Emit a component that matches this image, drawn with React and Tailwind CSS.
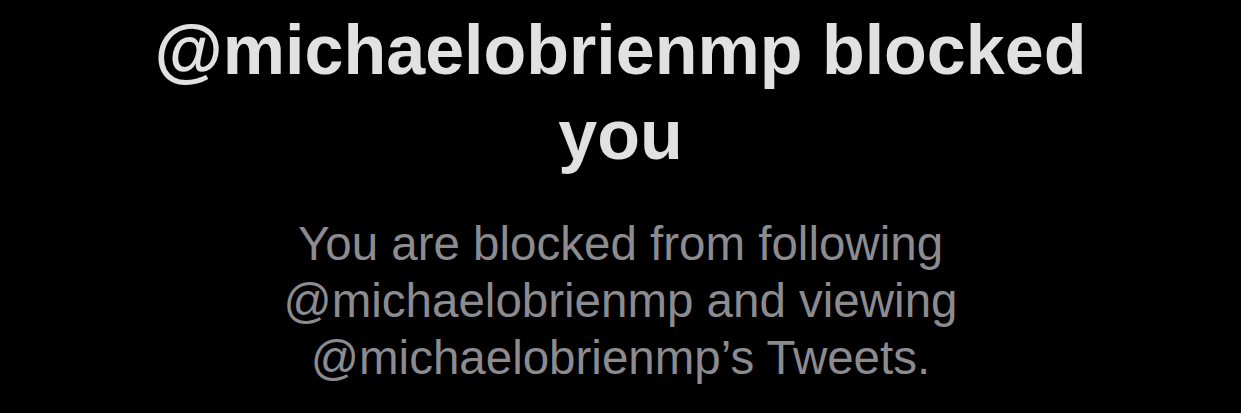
import React from "react";

const App = () => {
  return (
    <div className="w-[1241px] h-[413px] bg-black overflow-hidden flex flex-col items-center pt-[8px] font-['Liberation_Sans',Arial,sans-serif]">
      <h1 className="text-[70px] leading-[85px] font-bold text-[#e1e1e1] text-center">
        <span className="block">@michaelobrienmp blocked</span>
        <span className="block">you</span>
      </h1>
      <p className="mt-[37px] text-[47.5px] leading-[57px] text-[#8b8b90] text-center">
        <span className="block">You are blocked from following</span>
        <span className="block">@michaelobrienmp and viewing</span>
        <span className="block">@michaelobrienmp’s Tweets.</span>
      </p>
    </div>
  );
};

export default App;
